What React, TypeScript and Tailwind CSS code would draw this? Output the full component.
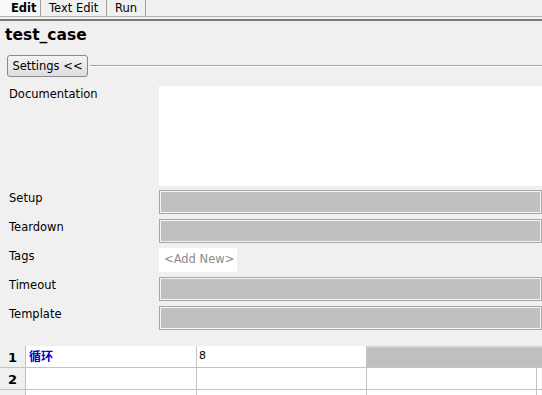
const Field = () => (
  <div className="flex-1 h-[24px] border border-[#a6a6a6] shadow-[inset_0_0_0_1px_#f4f4f4] bg-[#c0c0c0]" />
);

const Row = ({ label, children }: { label: string; children: React.ReactNode }) => (
  <div className="flex h-[24px] mb-[5px]">
    <div className="w-[159px] pl-[9px]">{label}</div>
    {children}
  </div>
);

const App = () => {
  return (
    <div className="w-[542px] h-[395px] overflow-hidden bg-[#f0f0f0] font-['DejaVu_Sans',sans-serif] text-[11.5px] text-black">
      {/* tabs */}
      <div className="flex h-[17px] border-b border-[#b4b4b4] text-[11.5px]">
        <div className="w-[41px] bg-[#fafafa] border-r border-[#a0a0a0] pl-[11px] font-bold leading-[16px]">Edit</div>
        <div className="w-[66px] border-r border-[#a0a0a0] pl-[8px] leading-[16px]">Text Edit</div>
        <div className="w-[39px] border-r border-[#a0a0a0] pl-[8px] leading-[16px]">Run</div>
      </div>
      <div className="h-[4px] border-b-2 border-[#7a7a7a]" />
      <div className="pl-[5px] pt-[4px] h-[33px] font-bold text-[15.5px] leading-[20px]">test_case</div>
      <div className="flex items-center h-[23px] pl-[7px]">
        <div className="w-[81px] h-[22px] rounded-[3px] border border-[#8a8a8a] bg-gradient-to-b from-[#f4f4f4] to-[#dddddd] text-center leading-[20px] text-[11.5px]">
          Settings &lt;&lt;
        </div>
        <div className="flex-1 ml-[2px] h-[2px] border-t border-[#a0a0a0] border-b border-b-white" />
      </div>
      <div className="h-[9px]" />
      <div className="flex h-[100px] mb-[4px]">
        <div className="w-[159px] pl-[9px]">Documentation</div>
        <div className="flex-1 bg-white" />
      </div>
      <Row label="Setup">
        <Field />
      </Row>
      <Row label="Teardown">
        <Field />
      </Row>
      <Row label="Tags">
        <div className="w-[78px] bg-white text-[#8c8c8c] pl-[5px] pt-[3px] text-[11.5px] whitespace-nowrap">&lt;Add New&gt;</div>
      </Row>
      <Row label="Timeout">
        <Field />
      </Row>
      <Row label="Template">
        <Field />
      </Row>
      <div className="h-[11px]" />
      {/* grid */}
      <div className="grid grid-cols-[26px_171px_170px_170px_1fr] bg-white">
        <div className="h-[22px] bg-[#f0f0f0] border-r border-b border-[#c4c4c4] text-center font-bold text-[13px] leading-[24px]">1</div>
        <div className="h-[22px] border-r border-b border-[#c4c4c4] pl-[3px] font-bold text-[#0000c8] text-[12px] leading-[20px] font-['Noto_Sans_CJK_SC',sans-serif]">循环</div>
        <div className="h-[22px] border-r border-b border-[#c4c4c4] pl-[2px] leading-[20px] text-[11px]">8</div>
        <div className="col-span-2 h-[22px] border-b border-[#c4c4c4] bg-[#bfbfbf] border-t-2 border-t-[#d0d0d0]" />
        <div className="h-[22px] bg-[#f0f0f0] border-r border-b border-[#c4c4c4] text-center font-bold text-[13px] leading-[24px]">2</div>
        <div className="h-[22px] border-r border-b border-[#c4c4c4]" />
        <div className="h-[22px] border-r border-b border-[#c4c4c4]" />
        <div className="h-[22px] border-r border-b border-[#c4c4c4]" />
        <div className="h-[22px] border-b border-[#c4c4c4]" />
        <div className="h-[22px] bg-[#f0f0f0] border-r border-[#c4c4c4]" />
        <div className="h-[22px] border-r border-[#c4c4c4]" />
        <div className="h-[22px] border-r border-[#c4c4c4]" />
        <div className="h-[22px] border-r border-[#c4c4c4]" />
        <div className="h-[22px]" />
      </div>
    </div>
  );
};

export default App;
